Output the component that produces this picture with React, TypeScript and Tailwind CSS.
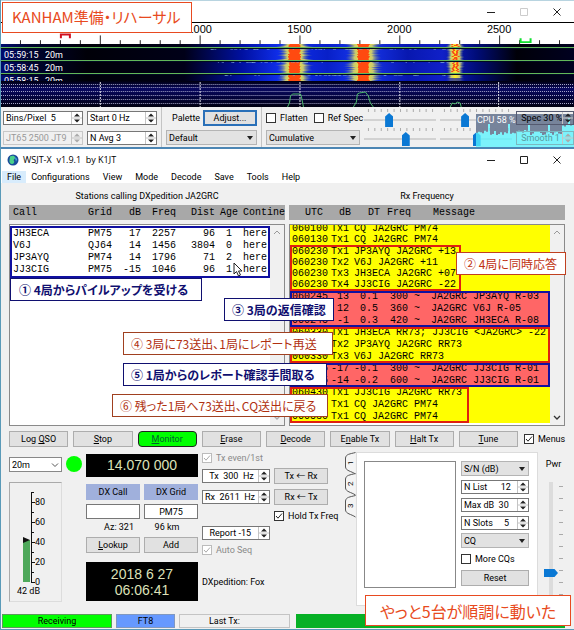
import type { ReactNode } from 'react'

const UI = "font-['Roboto','Noto_Sans_CJK_JP',sans-serif]"
const MONO = "font-['Liberation_Mono',monospace]"

/* ---------- small controls ---------- */

const SPIN_TONES = {
  normal: 'border-[#777] bg-white text-black',
  disabled: 'border-[#c8c8c8] bg-[#f0f0f0] text-[#999]',
  clear: 'border-[#555a70] bg-transparent text-black',
  clearDisabled: 'border-[#7ab8c0] bg-transparent text-[#5a9aa0]',
}

function Spin({ value, label, tone = 'normal', className = '' }: { value: string; label: string; tone?: keyof typeof SPIN_TONES; className?: string }) {
  const off = tone === 'disabled' || tone === 'clearDisabled'
  return (
    <div className={`flex h-[14px] min-w-0 border ${SPIN_TONES[tone]} ${className}`}>
      <input aria-label={label} defaultValue={value} disabled={off} className="min-w-0 flex-1 bg-transparent pl-0.5 text-[9px] leading-3 outline-none" />
      <svg viewBox="0 0 11 12" className="h-3 w-[11px] shrink-0">
        <path d="M0.5 0v12M1 6h10" stroke="#c4c4c4" fill="none" />
        <path d="M3 4.5h6L6 1.5zM3 7.5h6L6 10.5z" fill={off ? '#aaa' : '#222'} />
      </svg>
    </div>
  )
}

function Select({ value, label, className = '', light = false }: { value: string; label: string; className?: string; light?: boolean }) {
  return (
    <div className={`relative h-[15px] border ${light ? 'border-[#888] bg-white' : 'border-[#b4b4b4] bg-[#e2e2e2]'} ${className}`}>
      <select aria-label={label} className="block h-full w-full appearance-none bg-transparent pl-0.5 text-[9px] leading-3 outline-none">
        <option>{value}</option>
      </select>
      <svg viewBox="0 0 8 6" className="pointer-events-none absolute top-1 right-0.5 h-1.5 w-2">
        {light ? <path d="M1 1.5l3 3 3-3" fill="none" stroke="#555" /> : <path d="M1 1h6L4 5z" fill="#222" />}
      </svg>
    </div>
  )
}

function Check({ label, checked = false, disabled = false }: { label: string; checked?: boolean; disabled?: boolean }) {
  return (
    <label className={`flex items-center gap-1 text-[9px] leading-3 whitespace-nowrap ${disabled ? 'text-[#8a8a8a]' : 'text-black'}`}>
      <span className="relative size-[10px] shrink-0">
        <input type="checkbox" defaultChecked={checked} disabled={disabled} className={`block size-[10px] appearance-none border bg-white ${disabled ? 'border-[#bbb]' : 'border-[#333]'}`} />
        {checked && (
          <svg viewBox="0 0 10 10" className="pointer-events-none absolute inset-0 size-[10px]">
            <path d="M2 5l2 2.2L8 2.5" fill="none" stroke={disabled ? '#aaa' : '#222'} />
          </svg>
        )}
      </span>
      {label}
    </label>
  )
}

const BTN_TONES = {
  normal: 'border border-[#adadad] bg-[#e1e1e1] leading-[14px]',
  focus: 'border-2 border-[#2a70b8] bg-[#e1e1e1] leading-3',
  on: 'rounded border border-[#222] bg-[#00ff00] leading-[14px] text-[#006030]',
}

function Btn({ children, tone = 'normal', className = '' }: { children: ReactNode; tone?: keyof typeof BTN_TONES; className?: string }) {
  return (
    <button className={`h-4 text-center text-[9px] whitespace-nowrap ${BTN_TONES[tone]} ${className}`}>{children}</button>
  )
}

function Slider({ value, label }: { value: number; label: string }) {
  return (
    <div className="flex min-w-0 flex-1 flex-col">
      <svg viewBox="0 0 73 4" preserveAspectRatio="none" className="h-1 w-full">
        {Array.from({ length: 11 }, (_, i) => (
          <path key={i} d={`M${4.5 + i * 6.5} 0v3`} stroke="#aaa" />
        ))}
      </svg>
      <input
        type="range"
        aria-label={label}
        defaultValue={value}
        className="block h-[14px] w-full appearance-none bg-transparent bg-[linear-gradient(#d2d2d2,#d2d2d2)] bg-[length:100%_2px] bg-center bg-no-repeat [&::-webkit-slider-thumb]:h-[14px] [&::-webkit-slider-thumb]:w-2 [&::-webkit-slider-thumb]:appearance-none [&::-webkit-slider-thumb]:bg-[#0a78d4] [&::-webkit-slider-thumb]:[clip-path:polygon(50%_0,100%_25%,100%_100%,0_100%,0_25%)]"
      />
    </div>
  )
}

function WindowButtons({ dimMax = false }: { dimMax?: boolean }) {
  return (
    <div className="flex items-center gap-[25px] pr-[13px]">
      <button aria-label="Minimize"><svg viewBox="0 0 8 8" className="size-2"><path d="M0 4.5h8" stroke="#222" /></svg></button>
      <button aria-label="Maximize"><svg viewBox="0 0 8 8" className="size-2"><path d="M0.5 0.5h7v7h-7z" fill="none" stroke={dimMax ? '#ccc' : '#222'} /></svg></button>
      <button aria-label="Close"><svg viewBox="0 0 8 8" className="size-2"><path d="M0.5 0.5l7 7M7.5 0.5l-7 7" stroke="#222" /></svg></button>
    </div>
  )
}

/* ---------- wide graph window ---------- */

function FreqScale() {
  return (
    <svg viewBox="0 0 574 22" preserveAspectRatio="none" className="block h-[22px] w-full border-t border-black bg-white">
      {Array.from({ length: 28 }, (_, i) => {
        const x = 19.5 + i * 20
        return <path key={i} d={`M${x} 22v${(i + 1) % 5 === 0 ? -9 : -4}`} stroke="#222" />
      })}
      {[500, 1000, 1500, 2000, 2500].map((f) => (
        <text key={f} x={f / 5 - 1} y="11" textAnchor="middle" fontSize="11" className="font-['Liberation_Sans',sans-serif]">{f}</text>
      ))}
      <path d="M60 16v-4h9v4" fill="none" stroke="#d01020" strokeWidth="2" />
      <path d="M520.500 16v4h10v-4" fill="none" stroke="#10e030" strokeWidth="2" />
    </svg>
  )
}

// [centre, half width of the halo, half width of the core]
const SIGNALS = [
  [294, 14, 5],
  [363, 15, 5],
  [455, 8, 4],
]

function jitter(n: number) {
  const v = Math.sin(n * 12.9898) * 43758.5453
  return v - Math.floor(v)
}

function Waterfall() {
  const lines = Array.from({ length: 37 }, (_, y) => y)
  return (
    <svg viewBox="0 0 574 63" preserveAspectRatio="none" className="block h-[63px] w-full bg-black">
      <defs>
        <linearGradient id="sea">
          <stop offset="0" stopColor="#000b70" />
          <stop offset="0.05" stopColor="#000430" />
          <stop offset="0.15" stopColor="#000008" />
          <stop offset="0.32" stopColor="#000018" />
          <stop offset="0.42" stopColor="#0010a0" />
          <stop offset="0.49" stopColor="#1030f0" />
          <stop offset="0.57" stopColor="#0820c8" />
          <stop offset="0.63" stopColor="#1838f0" />
          <stop offset="0.71" stopColor="#0818b0" />
          <stop offset="0.77" stopColor="#1020c8" />
          <stop offset="0.83" stopColor="#000c78" />
          <stop offset="0.9" stopColor="#000008" />
          <stop offset="1" stopColor="#000020" />
        </linearGradient>
        <linearGradient id="halo">
          <stop offset="0" stopColor="#4060a0" stopOpacity="0" />
          <stop offset="0.25" stopColor="#c8c870" />
          <stop offset="0.5" stopColor="#fff020" />
          <stop offset="0.75" stopColor="#c8c870" />
          <stop offset="1" stopColor="#4060a0" stopOpacity="0" />
        </linearGradient>
        <linearGradient id="floor" x2="0" y2="1">
          <stop offset="0" stopColor="#000010" />
          <stop offset="0.3" stopColor="#080860" />
          <stop offset="0.6" stopColor="#040440" />
          <stop offset="1" stopColor="#000010" />
        </linearGradient>
      </defs>
      <rect width="574" height="37" fill="url(#sea)" />
      {SIGNALS.map(([cx, halo, core], s) =>
        lines.map((y) => {
          const quiet = s === 2 && (y === 3 || y === 4 || y === 16 || y === 17 || y > 33)
          const w = halo + jitter(y * 7 + s) * (s === 2 ? 2 : 6)
          const c = core + jitter(y * 3 + s) * 1.5
          return (
            <g key={`${s}-${y}`} opacity={quiet ? 0.3 : 1}>
              <rect x={cx - w} y={y} width={w * 2} height="1" fill="url(#halo)" />
              {s < 2 && <rect x={cx - c} y={y} width={c * 2} height="1" fill="#ff4a10" />}
              {s === 2 && y < 28 && (
                <>
                  <rect x={cx - 4 + jitter(y) * 3} y={y} width="2" height="1" fill="#f84818" />
                  <rect x={cx + jitter(y + 50) * 3} y={y} width="2" height="1" fill="#f84818" />
                </>
              )}
            </g>
          )
        })
      )}
      {Array.from({ length: 110 }, (_, i) => (
        <rect key={i} x={210 + jitter(i) * 250} y={[5, 18, 31][i % 3]} width={1 + jitter(i + 9) * 3} height="1" fill="#80a8d8" opacity="0.5" />
      ))}
      {[3, 16, 29].map((y) => (
        <g key={y}>
          <path d={`M0 ${y + 1.5}h574`} stroke="#000a20" />
          <path d={`M0 ${y + 0.5}h574`} stroke="#62b85a" />
        </g>
      ))}
      <g fill="#fff" fontSize="9" className="font-['Roboto',sans-serif]">
        <text x="3" y="14">05:59:15</text>
        <text x="44" y="14">20m</text>
        <text x="3" y="27">05:58:45</text>
        <text x="44" y="27">20m</text>
        <text x="3" y="40">05:58:15</text>
        <text x="44" y="40">20m</text>
      </g>
      <rect y="37" width="574" height="26" fill="url(#floor)" />
      {[40, 43, 47, 51, 55, 59].map((y) => (
        <path key={y} d={`M0 ${y + 0.5}h574`} stroke="#a8a8cc" strokeDasharray="1 1" />
      ))}
      {[99, 199, 299, 399, 498].map((x) => (
        <path key={x} d={`M${x + 0.5} 38v25`} stroke="#e0e0e8" strokeDasharray="2 1" />
      ))}
      <path d="M287 63l2-4 1-7 2-2h8l1 3 2 10M353 63l3-5 1-8 2-1 6-1 3 4 2 7 3 4M450 63l2-4 3 1 2-2 3 1 1 4" fill="none" stroke="#4ab86a" />
    </svg>
  )
}

function CpuMeter() {
  const edge = Array.from({ length: 50 }, (_, i) => {
    const dip = i % 10 === 6 ? 10 : 16 + jitter(i + 3) * 5
    const y = i > 42 ? dip - 6 : dip
    return `L${i * 2} ${y} L${i * 2 + 2} ${y}`
  }).join(' ')
  return (
    <div className="pointer-events-none absolute right-0 bottom-0 h-[33px] w-[98px]">
      <svg viewBox="0 0 98 33" preserveAspectRatio="none" className="absolute inset-0 size-full">
        <rect width="98" height="33" fill="#55f4ff" opacity="0.75" />
        <path d={`M0 0 ${edge} L98 0z`} fill="#77708a" opacity="0.85" />
      </svg>
      <span className="absolute top-0 left-px text-[9px] leading-3 text-white">CPU 58 %</span>
    </div>
  )
}

function WideGraph() {
  return (
    <section className="border-t border-b-2 border-t-[#b8d4e0] border-b-[#4c86b4] bg-[#f0f0f0]">
      <div className="flex h-[21px] items-center justify-end bg-white">
        <WindowButtons dimMax />
      </div>
      <FreqScale />
      <Waterfall />
      <div className="relative flex h-10 pl-0.5">
        <div className="grid w-[80px] grid-cols-1 content-start gap-1.5 pt-1">
          <Spin label="Bins per pixel" value="Bins/Pixel  5" />
          <Spin label="JT65 JT9 split" value="JT65 2500 JT9" tone="disabled" />
        </div>
        <div className="ml-1 grid w-[70px] grid-cols-1 content-start gap-1.5 pt-1">
          <Spin label="Start" value="Start 0 Hz" />
          <Spin label="N Avg" value="N Avg 3" />
        </div>
        <div className="ml-1 grid w-[96px] grid-cols-1 content-start gap-1 border-l border-[#c4c4c4] pt-[3px] pl-1">
          <div className="flex items-center justify-between pl-1.5">
            <span className="text-[9px] leading-3">Palette</span>
            <Btn tone="focus" className="w-[54px]">Adjust...</Btn>
          </div>
          <Select label="Palette" value="Default" />
        </div>
        <div className="ml-1 grid w-[99px] grid-cols-1 content-start gap-1 border-l border-[#c4c4c4] pt-[3px] pl-1">
          <div className="flex h-4 items-center gap-1.5">
            <Check label="Flatten" />
            <Check label="Ref Spec" />
          </div>
          <Select label="Spectrum type" value="Cumulative" />
        </div>
        <div className="ml-1 grid min-w-0 flex-1 content-start gap-px pt-0.5">
          <div className="flex gap-1">
            <Slider label="Waterfall gain" value={33} />
            <Slider label="Spectrum gain" value={33} />
          </div>
          <div className="flex gap-1">
            <Slider label="Waterfall zero" value={59} />
            <Slider label="Spectrum zero" value={51} />
          </div>
        </div>
        <CpuMeter />
        <div className="relative ml-1 grid w-[58px] grid-cols-1 content-start gap-1.5 pt-1">
          <Spin label="Spec" value=" Spec 30 %" tone="clear" />
          <Spin label="Smooth" value=" Smooth 1" tone="clearDisabled" />
        </div>
      </div>
    </section>
  )
}

/* ---------- decode lists ---------- */

const STATIONS = [
  ['JH3ECA', 'PM75', '17', '2257', '96', '1', 'here'],
  ['V6J', 'QJ64', '14', '1456', '3804', '0', 'here'],
  ['JP3AYQ', 'PM74', '14', '1796', '71', '2', 'here'],
  ['JJ3CIG', 'PM75', '-15', '1046', '96', '1', 'here'],
]

const STATION_COLS = [
  'w-[75px] text-left',
  'w-[32px] text-left',
  'w-[21px] text-right',
  'w-[35px] text-right',
  'w-[39px] text-right',
  'w-[28px] text-center',
  'text-left',
]

type Row = string[]
interface Group {
  rows: Row[]
  bg: string
  frame: string
}

const GROUPS: Group[] = [
  {
    bg: 'bg-[#ffff00]',
    frame: 'leading-[11px]',
    rows: [
      ['060100', 'Tx1', 'CQ JA2GRC PM74'],
      ['060130', 'Tx1', 'CQ JA2GRC PM74'],
    ],
  },
  {
    bg: 'bg-[#ffff00]',
    frame: 'w-[171px] py-px leading-[11px] outline-2 -outline-offset-2 outline-[#e02010]',
    rows: [
      ['060230', 'Tx1', 'JP3AYQ JA2GRC +13'],
      ['060230', 'Tx2', 'V6J JA2GRC +11'],
      ['060230', 'Tx3', 'JH3ECA JA2GRC +07'],
      ['060230', 'Tx4', 'JJ3CIG JA2GRC -22'],
    ],
  },
  {
    bg: 'bg-[#ff6666]',
    frame: 'leading-3 outline-2 -outline-offset-2 outline-[#1010a0]',
    rows: [
      ['060245', '13', '0.1', '300', '~', 'JA2GRC JP3AYQ R-03'],
      ['060245', '12', '0.5', '360', '~', 'JA2GRC V6J R-05'],
      ['060245', '-1', '0.3', '420', '~', 'JA2GRC JH3ECA R-08'],
    ],
  },
  {
    bg: 'bg-[#ffff00]',
    frame: 'leading-3 outline-2 -outline-offset-2 outline-[#e02010]',
    rows: [
      ['060330', 'Tx1', 'JH3ECA RR73; JJ3CIG <JA2GRC> -22'],
      ['060330', 'Tx2', 'JP3AYQ JA2GRC RR73'],
      ['060330', 'Tx3', 'V6J JA2GRC RR73'],
    ],
  },
  {
    bg: 'bg-[#ff6666]',
    frame: 'leading-3 outline-2 -outline-offset-2 outline-[#1010a0]',
    rows: [
      ['060345', '-17', '-0.1', '300', '~', 'JA2GRC JJ3CIG R-01'],
      ['060345', '-14', '-0.2', '600', '~', 'JA2GRC JJ3CIG R-01'],
    ],
  },
  {
    bg: 'bg-[#ffff00]',
    frame: 'w-[179px] leading-3 outline-2 -outline-offset-2 outline-[#e02010]',
    rows: [
      ['060430', 'Tx1', 'JJ3CIG JA2GRC RR73'],
      ['060500', 'Tx1', 'CQ JA2GRC PM74'],
      ['060530', 'Tx1', 'CQ JA2GRC PM74'],
    ],
  },
]

function RxTable({ rows }: { rows: Row[] }) {
  return (
    <table className="ml-0.5 w-[256px] table-fixed border-collapse whitespace-pre">
      <colgroup>
        <col className="w-[39px]" />
        <col className="w-[18px]" />
        <col className="w-[29px]" />
        <col className="w-[30px]" />
        <col className="w-[23px]" />
        <col />
      </colgroup>
      <tbody>
        {rows.map((r, i) => (
          <tr key={i}>
            <td className="p-0">{r[0]}</td>
            <td className="p-0 text-right">{r[1]}</td>
            {r.length === 3 ? (
              <td colSpan={4} className="p-0 pl-[5px]">{r[2]}</td>
            ) : (
              <>
                <td className="p-0 text-right">{r[2]}</td>
                <td className="p-0 text-right">{r[3]}</td>
                <td className="p-0 pl-1.5">{r[4]}</td>
                <td className="p-0">{r[5]}</td>
              </>
            )}
          </tr>
        ))}
      </tbody>
    </table>
  )
}

function ScrollBar({ dim = false }: { dim?: boolean }) {
  return (
    <div className="flex w-[14px] shrink-0 flex-col items-center justify-between bg-[#f0f0f0] py-1">
      <svg viewBox="0 0 8 6" className="h-1.5 w-2"><path d="M1 5l3-3 3 3" fill="none" stroke="#999" /></svg>
      <svg viewBox="0 0 8 6" className="h-1.5 w-2"><path d="M1 1l3 3 3-3" fill="none" stroke={dim ? '#aaa' : '#333'} strokeWidth="1.300" /></svg>
    </div>
  )
}

function Lists() {
  return (
    <div className="grid grid-cols-2 gap-1 pr-[9px] pl-2">
      <div className="min-w-0">
        <h2 className="pt-[7px] pb-[3px] text-center text-[9px] leading-3 text-black">Stations calling DXpedition JA2GRC</h2>
        <div className={`overflow-hidden bg-[#a8a8a8] py-0.5 pl-1 text-[10px] leading-[11px] ${MONO}`}>
          <div className="flex whitespace-nowrap">
            {['Call', 'Grid', 'dB', 'Freq', 'Dist', 'Age', 'Contine'].map((h, i) => (
              <span key={h} className={`shrink-0 ${STATION_COLS[i]}`}>{h}</span>
            ))}
          </div>
        </div>
        <div className="mt-1 flex h-[202px] border border-[#8a8a8a] bg-white">
          <div className="min-w-0 flex-1">
            <div className="mt-px py-0.5 outline-2 -outline-offset-2 outline-[#1010a0]">
              <table className={`ml-[3px] w-[256px] table-fixed border-collapse text-[10px] leading-[12px] ${MONO}`}>
                <tbody>
                  {STATIONS.map((s) => (
                    <tr key={s[0]}>
                      {s.map((c, i) => (
                        <td key={i} className={`p-0 ${STATION_COLS[i]}`}>{c}</td>
                      ))}
                    </tr>
                  ))}
                </tbody>
              </table>
            </div>
          </div>
          <ScrollBar dim />
        </div>
      </div>
      <div className="min-w-0">
        <h2 className="pt-[7px] pb-[3px] text-center text-[9px] leading-3 text-black">Rx Frequency</h2>
        <div className={`overflow-hidden bg-[#a8a8a8] py-0.5 text-[10px] leading-[11px] ${MONO}`}>
          <div className="flex whitespace-nowrap">
            <span className="w-[34px] text-right">UTC</span>
            <span className="w-[28px] text-right">dB</span>
            <span className="w-[29px] text-right">DT</span>
            <span className="w-[31px] text-right">Freq</span>
            <span className="pl-[22px]">Message</span>
          </div>
        </div>
        <div className="mt-1 flex h-[202px] border border-[#8a8a8a] bg-white">
          <div className={`flex min-w-0 flex-1 flex-col justify-end overflow-hidden pb-0.5 text-[10px] ${MONO}`}>
            {GROUPS.map((g, i) => (
              <div key={i} className={`shrink-0 ${g.bg}`}>
                <div className={g.frame}>
                  <RxTable rows={g.rows} />
                </div>
              </div>
            ))}
          </div>
          <ScrollBar />
        </div>
      </div>
    </div>
  )
}

/* ---------- lower controls ---------- */

function LevelMeter() {
  return (
    <div className="mt-[10px] h-[120px] border border-[#dcdcdc] border-t-[#aaa] border-l-[#aaa]">
      <svg viewBox="0 0 51 118" className="h-[118px] w-[51px]">
        <rect x="13" y="57" width="7" height="42" fill="#4ea85a" />
        <path d="M13 54v6l7-3z" fill="#111" />
        <path d="M21.500 10v89" stroke="#111" />
        {Array.from({ length: 10 }, (_, i) => (
          <path key={i} d={`M21 ${99 - i * 10 + 0.5}h${i % 2 ? 3 : 4}`} stroke="#111" />
        ))}
        {[0, 20, 40, 60, 80].map((v) => (
          <text key={v} x="25" y={102 - v} fontSize="9">{v}</text>
        ))}
        <text x="7" y="111" fontSize="9">42 dB</text>
      </svg>
    </div>
  )
}

function Tabs() {
  return (
    <svg viewBox="0 0 12 66" className="h-[66px] w-3 shrink-0">
      {[0, 21, 43].map((y, i) => (
        <g key={y}>
          <path d={`M11.500 ${y + 0.5}C6 ${y + 2} 2 ${y + 2} 1.500 ${y + 6}V${y + 15}C2 ${y + 19} 7 ${y + 19} 11.500 ${y + 22}`} fill="#f4f4f4" stroke="#555" />
          <text transform={`translate(9 ${y + 13}) rotate(-90)`} fontSize="8">{i + 1}</text>
        </g>
      ))}
    </svg>
  )
}

// text before the accelerator, the accelerator, the rest
const BUTTONS = [
  ['Log ', 'Q', 'SO'],
  ['', 'S', 'top'],
  ['', 'M', 'onitor'],
  ['', 'E', 'rase'],
  ['', 'D', 'ecode'],
  ['E', 'n', 'able Tx'],
  ['', 'H', 'alt Tx'],
  ['', 'T', 'une'],
]

function ButtonRow() {
  return (
    <div className="flex items-center gap-[5px] pt-[5px] pr-[9px] pl-2">
      {BUTTONS.map(([pre, key, rest]) => (
        <Btn key={pre + key + rest} tone={key === 'M' ? 'on' : 'normal'} className="min-w-0 flex-1">
          {pre}<u>{key}</u>{rest}
        </Btn>
      ))}
      <div className="ml-px w-[41px] shrink-0">
        <Check label="Menus" checked />
      </div>
    </div>
  )
}

const LCD = "bg-black text-center text-[14px] text-[#dde0b8] font-['Liberation_Sans',sans-serif]"

function Controls() {
  return (
    <div className="flex h-[159px] gap-1 pt-[5px] pr-[9px] pl-2">
      <div className="w-[53px] shrink-0 pt-[5px]">
        <Select label="Band" value="20m" light />
        <LevelMeter />
      </div>
      <div className="mt-1 size-4 shrink-0 rounded-full bg-[#00ff00]" />

      <div className="min-w-0 flex-1 pt-0.5">
        <div className={`h-[23px] leading-[23px] ${LCD}`}>14.070 000</div>
        <div className="mt-[7px] grid grid-cols-2 gap-x-1 text-center text-[9px] leading-4">
          <label htmlFor="dxcall" className="bg-[#a0b0dc]">DX Call</label>
          <label htmlFor="dxgrid" className="bg-[#a0b0dc]">DX Grid</label>
          <input id="dxcall" className="mt-1 h-[15px] w-full min-w-0 border border-[#777] bg-white text-center text-[9px]" />
          <input id="dxgrid" defaultValue="PM75" className="mt-1 h-[15px] w-full min-w-0 border border-[#777] bg-white text-center text-[9px]" />
          <span className="pl-3">Az: 321</span>
          <span className="pr-2">96 km</span>
          <Btn className="mt-0.5"><u>L</u>ookup</Btn>
          <Btn className="mt-0.5">Add</Btn>
        </div>
        <div className={`mt-[9px] h-[39px] pt-1 leading-4 ${LCD}`}>
          <div>2018 6 27</div>
          <div>06:06:41</div>
        </div>
      </div>

      <div className="w-[138px] shrink-0">
        <Check label="Tx even/1st" checked disabled />
        <div className="mt-1 grid grid-cols-[68px_54px] gap-x-1 gap-y-[5px]">
          <Spin label="Tx frequency" value="  Tx  300  Hz" className="mt-px" />
          <Btn>Tx ← Rx</Btn>
          <Spin label="Rx frequency" value="Rx  2611  Hz" className="mt-px" />
          <Btn>Rx ← Tx</Btn>
        </div>
        <div className="mt-[5px] pl-[72px]">
          <Check label="Hold Tx Freq" checked />
        </div>
        <Spin label="Report" value="  Report -15" className="mt-1 w-[68px]" />
        <div className="mt-1">
          <Check label="Auto Seq" checked disabled />
        </div>
        <div className="mt-5 text-[9px] leading-3">DXpedition: Fox</div>
      </div>

      <div className="flex w-[194px] shrink-0">
        <Tabs />
        <div className="flex min-w-0 flex-1 gap-[5px] border border-[#dcdcdc] bg-white pt-2 pr-2 pl-[7px]">
          <div className="h-[127px] min-w-0 flex-1 border border-[#888]" />
          <div className="flex w-[68px] shrink-0 flex-col gap-[3px]">
            <Select label="Sort by" value="S/N (dB)" />
            <Spin label="N List" value="N List      12" className="mt-px" />
            <Spin label="Max dB" value="Max dB  30" className="mt-px" />
            <Spin label="N Slots" value="N Slots     5" className="mt-px" />
            <Select label="CQ" value="CQ" />
            <div className="mt-0.5">
              <Check label="More CQs" />
            </div>
            <Btn className="mt-0.5">Reset</Btn>
          </div>
        </div>
      </div>

      <div className="flex w-[23px] shrink-0 flex-col items-center text-[9px] leading-3">
        <label htmlFor="pwr" className="mt-1.5">Pwr</label>
        <div className="mt-3 flex">
          <input
            id="pwr"
            type="range"
            defaultValue={21}
            className="block h-[118px] w-[14px] appearance-none bg-transparent bg-[linear-gradient(#dcdcdc,#dcdcdc)] bg-[length:4px_100%] bg-center bg-no-repeat [direction:rtl] [writing-mode:vertical-lr] [&::-webkit-slider-thumb]:h-2 [&::-webkit-slider-thumb]:w-[14px] [&::-webkit-slider-thumb]:appearance-none [&::-webkit-slider-thumb]:bg-[#0a78d4] [&::-webkit-slider-thumb]:[clip-path:polygon(0_0,75%_0,100%_50%,75%_100%,0_100%)]"
          />
          <svg viewBox="0 0 5 118" className="h-[118px] w-[5px]">
            {Array.from({ length: 10 }, (_, i) => (
              <path key={i} d={`M1 ${4.5 + i * 12}h4`} stroke="#aaa" />
            ))}
          </svg>
        </div>
      </div>
    </div>
  )
}

function StatusBar() {
  return (
    <div className="flex h-[14px] gap-1 pr-[9px] pl-px text-center text-[9px] leading-3">
      <div className="w-[110px] border border-[#5a9a5a] bg-[#00ff00]">Receiving</div>
      <div className="w-[59px] border border-[#8098c0] bg-[#6699ff]">FT8</div>
      <div className="w-[111px] border border-[#c4c4c4] pr-5">Last Tx:</div>
      <div className="ml-0.5 flex-1 bg-[#06b025]" />
    </div>
  )
}

function MainWindow() {
  return (
    <section className="border-b-2 border-[#5a9ab8] bg-[#f0f0f0]">
      <header className="bg-white">
        <div className="flex h-[21px] items-center justify-between pl-1.5">
          <div className="flex items-center gap-1">
            <svg viewBox="0 0 12 12" className="size-3">
              <circle cx="6" cy="6" r="5.500" fill="#1a4a9a" />
              <path d="M3 2.500c2-1 5-1 5 1s-2 2-1 3.500-1 3.500-2.500 3S2 8 2.500 6z" fill="#4ad08a" />
              <path d="M8 3l2 2-1 3z" fill="#4ab0e0" />
            </svg>
            <h1 className="text-[9px] leading-3 whitespace-pre font-['Open_Sans',sans-serif]">WSJT-X  v1.9.1  by K1JT</h1>
          </div>
          <WindowButtons />
        </div>
        <nav className="flex h-[13px] items-center gap-[13px] pl-px text-[9px] leading-3">
          <a href="#" className="-mr-2 bg-[#d8ecfc] px-[5px]">File</a>
          {['Configurations', 'View', 'Mode', 'Decode', 'Save', 'Tools', 'Help'].map((m) => (
            <a href="#" key={m}>{m}</a>
          ))}
        </nav>
      </header>
      <Lists />
      <ButtonRow />
      <Controls />
      <div className="pt-2 pb-px">
        <StatusBar />
      </div>
    </section>
  )
}

/* ---------- callouts laid over the windows ---------- */

function Note({ children, className }: { children: ReactNode; className: string }) {
  return (
    <div className={`absolute flex items-center border bg-white whitespace-nowrap [font-feature-settings:'palt'] font-['Noto_Sans_CJK_JP',sans-serif] ${className}`}>
      {children}
    </div>
  )
}

const NAVY = 'h-[23px] border-[#101070] text-[12px] font-bold text-[#101070]'
const RUST = 'h-[23px] border-[#a04020] text-[12px] text-[#b03010]'

export default function App() {
  return (
    <main className={`relative overflow-hidden border-l border-[#5a9ab8] text-black ${UI}`}>
      <WideGraph />
      <MainWindow />

      <Note className="top-0.5 left-px h-[31px] w-[190px] border-[#e84a20] pl-[9px] text-[15px] text-[#e84a20]">KANHAM準備・リハーサル</Note>
      <Note className={`top-[278px] left-[9px] w-[192px] pl-2 ${NAVY}`}>① 4局からパイルアップを受ける</Note>
      <Note className="top-[252px] left-[455px] h-[23px] w-[110px] border-[#c04020] pl-[7px] text-[12px] text-[#c03010]">② 4局に同時応答</Note>
      <Note className={`top-[298px] left-[223px] w-[110px] pl-[7px] ${NAVY}`}>③ 3局の返信確認</Note>
      <Note className={`top-[332px] left-[122px] w-[210px] pl-[7px] ${RUST}`}>④ 3局に73送出、1局にレポート再送</Note>
      <Note className={`top-[363px] left-[122px] w-[204px] pl-[7px] ${NAVY}`}>⑤ 1局からのレポート確認手間取る</Note>
      <Note className={`top-[394px] left-[111px] w-[216px] pl-[7px] ${RUST}`}>⑥ 残った1局へ73送出、CQ送出に戻る</Note>
      <Note className="top-[595px] left-[364px] h-[31px] w-[206px] justify-center border-[#e84a20] text-[16px] text-[#e84a20]">やっと5台が順調に動いた</Note>

      <svg viewBox="0 0 10 15" className="absolute top-[262px] left-[232px] h-[15px] w-[10px]">
        <path d="M1 1v11l2.500-2.500L5.500 14l2-1-2-4H9z" fill="#fff" stroke="#222" />
      </svg>
    </main>
  )
}
